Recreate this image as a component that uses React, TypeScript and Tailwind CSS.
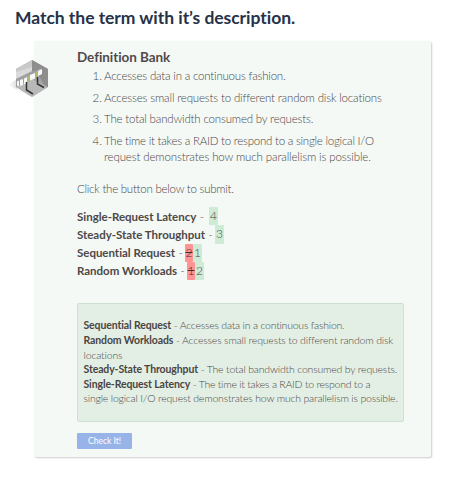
import type { ReactNode } from "react";

function HexBadge() {
  return (
    <svg width="42" height="40" viewBox="0 0 42 40" className="block">
      <defs>
        <linearGradient id="shade" x1="0" x2="1" y1="0" y2="0">
          <stop offset="0" stopColor="#888" stopOpacity="0" />
          <stop offset="1" stopColor="#777" stopOpacity="0.6" />
        </linearGradient>
      </defs>
      <path d="M0 26 L9 20 V31 L20 36 Z" fill="url(#shade)" />
      <path d="M24 1 L40 10 V28 L24 38 L8 28 V10 Z" fill="#a4a4a4" />
      <path d="M24 1 L8 10 V18 L24 10 Z" fill="#c9c9c9" />
      <path d="M8 13 L24 8 V12 L8 20 Z" fill="#dadada" />
      <path d="M24 1 L40 10 V28 L36 26 L30 15 L24 12 Z" fill="#8e8e8e" />
      <path d="M24 20 L39 28 L24 38 L9 28 Z" fill="#b8b8b8" />
      <path d="M8 20 L33 9 V15 L8 27 Z" fill="#a0a0a0" />
      <path d="M9 22.500 l2 -1 v6 l-2 -1z M12 21 l3 -1 v6 l-3 1z M16 19.500 l3 -1.500 v6 l-3 1.500z M22 16 l5 -2 v5.500 l-5 2z M30 12 l4 -2 v5 l-4 2z" fill="#f8f8f8" />
      <path d="M19 17.500 l3 -1.500 v6 l-3 1.500z M27 13.500 l3 -1.500 v6 l-3 1.500z" fill="#b5b66e" />
      <path d="M18.500 23 V31 L25 35 M29.500 18 V25 L36 28.500" fill="none" stroke="#333" strokeWidth="1.500" />
    </svg>
  );
}

function Item({ n, children }: { n: number; children: ReactNode }) {
  return (
    <li className="flex">
      <span className="w-[11.500px] leading-[21px]">{n}.</span>
      <div>{children}</div>
    </li>
  );
}

function Term({ name, className, children }: { name: string; className: string; children: ReactNode }) {
  return (
    <div className="flex h-[18.300px] items-center">
      <div className={`flex gap-[3.500px] ${className}`}>
        <b className="font-bold tracking-[-0.02px] text-[#4e4848]">{name}</b>
        <span>-</span>
      </div>
      {children}
    </div>
  );
}

const right = "flex h-[18.300px] w-[9px] items-center justify-center rounded-[1px] bg-[#cdebd5] text-[12px]";
const wrong = "flex h-[18.300px] w-2 items-center justify-center rounded-[1px] bg-[#ff9494] text-[12px] text-[#3a3030] line-through";

export default function App() {
  return (
    <main className="h-[490px] w-[470px] overflow-hidden bg-white font-['Lato',sans-serif] text-[11.500px] font-light text-[#4c4848] [font-variant-ligatures:none]">
      <h1 className="h-[41px] pl-[15px] pt-[6px] text-[17.500px] leading-[24px] font-bold tracking-[-0.04px] whitespace-nowrap text-[#263248]">
        Match the term with it’s description.
      </h1>
      <section className="relative ml-[34px] h-[416px] w-[397px] rounded-[2px] bg-[#f4f9f6] pl-[43px] pt-2 whitespace-nowrap shadow-[1px_1px_2px_rgba(0,0,0,0.2)]">
        <div className="absolute -left-[26px] top-[18px]">
          <HexBadge />
        </div>
        <h2 className="h-4 text-[13.500px] leading-[17px] font-bold tracking-[-0.06px] text-[#514a4a]">Definition Bank</h2>
        <ol className="h-[113px] pl-[15.500px]">
          <Item n={1}><p className="h-[22px] leading-[21px] tracking-[-0.21px]">Accesses data in a continuous fashion.</p></Item>
          <Item n={2}><p className="h-[21px] leading-[21px] tracking-[-0.165px]">Accesses small requests to different random disk locations</p></Item>
          <Item n={3}><p className="h-[22px] leading-[21px] tracking-[-0.18px]">The total bandwidth consumed by requests.</p></Item>
          <Item n={4}>
            <p className="h-[18.500px] leading-[21px] tracking-[-0.245px]">The time it takes a RAID to respond to a single logical I/O</p>
            <p className="leading-4 tracking-[-0.13px]">request demonstrates how much parallelism is possible.</p>
          </Item>
        </ol>
        <p className="h-[29px] leading-[21px] tracking-[-0.25px]">Click the button below to submit.</p>
        <div className="h-[96px]">
          <Term name="Single-Request Latency" className="w-[132px]"><span className={right}>4</span></Term>
          <Term name="Steady-State Throughput" className="w-[138px]"><span className={right}>3</span></Term>
          <Term name="Sequential Request" className="w-[108px]"><span className={wrong}>2</span><span className={right}>1</span></Term>
          <Term name="Random Workloads" className="w-[110px]"><span className={wrong}>1</span><span className={right}>2</span></Term>
        </div>
        <div className="h-[119px] w-[327px] rounded-[2px] border border-[#cfdfd1] bg-[#e3efe4] pl-[5.500px] pt-[14.400px] text-[10.500px] leading-[14.600px] [&_b]:font-bold [&_b]:tracking-[-0.12px] [&_b]:text-[#4a4545]">
          <p className="tracking-[-0.22px]"><b>Sequential Request</b> - Accesses data in a continuous fashion.</p>
          <p className="tracking-[-0.17px]"><b>Random Workloads</b> - Accesses small requests to different random disk</p>
          <p className="tracking-[-0.15px]">locations</p>
          <p className="tracking-[-0.18px]"><b>Steady-State Throughput</b> - The total bandwidth consumed by requests.</p>
          <p className="tracking-[-0.25px]"><b>Single-Request Latency</b> - The time it takes a RAID to respond to a</p>
          <p className="tracking-[-0.19px]">single logical I/O request demonstrates how much parallelism is possible.</p>
        </div>
        <button className="mt-[11px] block h-4 w-[55px] rounded-[1px] bg-[#98b3e7] text-[8.500px] leading-4 font-normal text-white">Check It!</button>
      </section>
    </main>
  );
}
